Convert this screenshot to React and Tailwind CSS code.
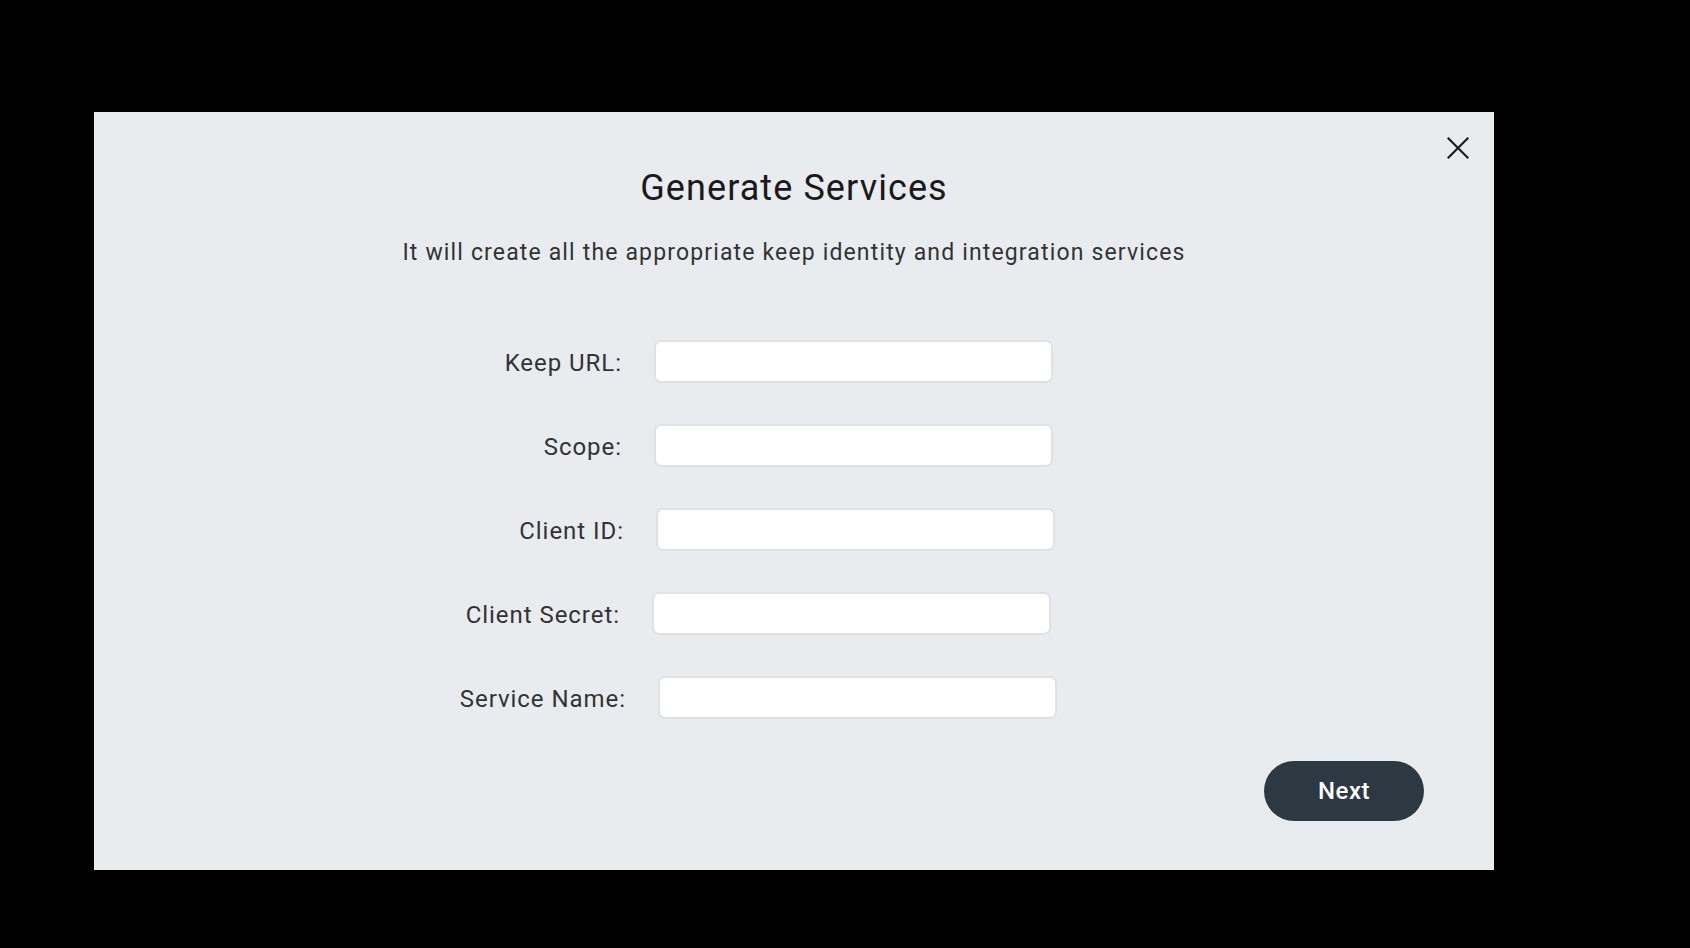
export default function App() {
  const fields = [
    { label: 'Keep URL:', shift: 'ml-0' },
    { label: 'Scope:', shift: 'ml-0' },
    { label: 'Client ID:', shift: 'ml-[2px]' },
    { label: 'Client Secret:', shift: '-ml-[2px]' },
    { label: 'Service Name:', shift: 'ml-[4px]' },
  ]

  return (
    <div className="w-full h-[948px] bg-black pt-[112px] pl-[94px] font-['Roboto',sans-serif]">
      <div className="relative w-[1400px] h-[758px] bg-[#e9ecef] flex flex-col">
        {/* Close */}
        <button className="absolute top-[25px] right-[25px] w-[22px] h-[22px] text-[#1e1e1e]">
          <svg className="w-[22px] h-[22px]" viewBox="0 0 22 22" fill="none" stroke="currentColor">
            <path strokeWidth={2.2} strokeLinecap="square" d="M1.5 1.5l19 19M20.5 1.5l-19 19" />
          </svg>
        </button>

        {/* Header */}
        <h1 className="mt-[54px] text-center text-[36px] leading-[44px] tracking-[0.03em] text-[#1a1a1a]">
          Generate Services
        </h1>
        <p className="mt-[29px] text-center text-[23px] leading-[28px] tracking-[0.05em] text-[#333]">
          It will create all the appropriate keep identity and integration services
        </p>

        {/* Form */}
        <div className="mt-[73px] flex flex-col gap-[41px]">
          {fields.map((f) => (
            <div key={f.label} className={`flex items-center pl-[328px] ${f.shift}`}>
              <label className="w-[200px] pt-[3px] text-right text-[24px] tracking-[0.04em] text-[#333]">
                {f.label}
              </label>
              <input
                type="text"
                className="ml-[32px] w-[399px] h-[43px] bg-white border-2 border-[#dfe1e3] rounded-[7px] outline-none px-3"
              />
            </div>
          ))}
        </div>

        {/* Footer */}
        <div className="mt-[42px] flex justify-end pr-[70px]">
          <button className="w-[160px] h-[60px] rounded-full bg-[#2c3943] text-white text-[24px] font-medium tracking-[0.02em]">
            Next
          </button>
        </div>
      </div>
    </div>
  )
}
